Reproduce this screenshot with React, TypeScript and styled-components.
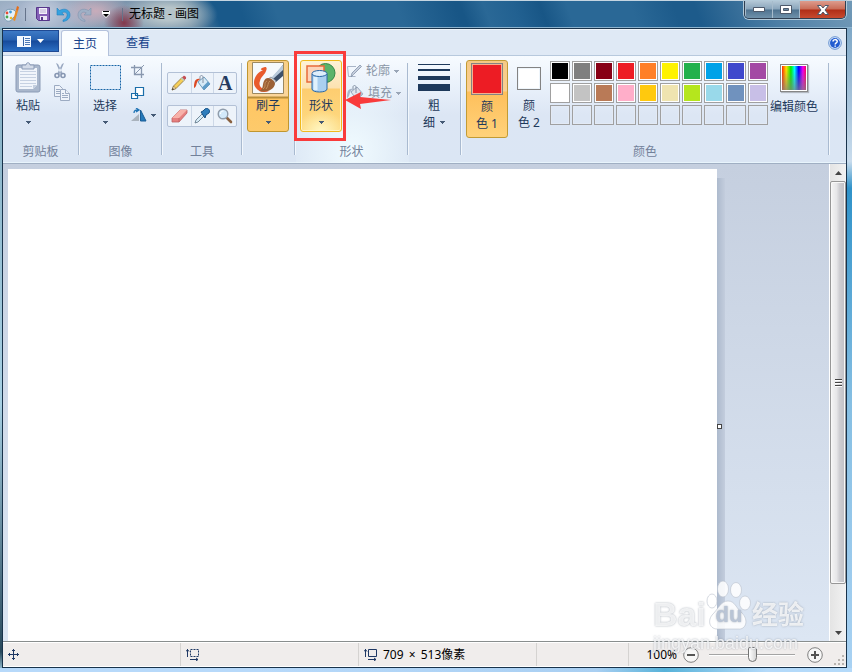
import React from 'react';
import styled, { createGlobalStyle, css } from 'styled-components';

const GlobalStyle = createGlobalStyle`
  * { box-sizing: border-box; }
  body {
    margin: 0;
    font: 12px/16px "Noto Sans", "Noto Sans CJK SC", sans-serif;
    color: #1e395b;
    overflow: hidden;
  }
  button { font: inherit; color: inherit; padding: 0; border: 0; background: none; }
  svg { display: block; flex: none; }
`;

const Frame = styled.div`
  display: flex;
  flex-direction: column;
  height: 100vh;
  padding: 0 5px 4px 2px;
  background:
    linear-gradient(90deg, #b7d9fa, #b7d9fa 30%, #a9cff2 70%, #57b2d9 78%, #b4dafa 90%) bottom / 100% 4px no-repeat,
    linear-gradient(#6f9dbf, #c9dced 24%, #2f92c9 28%, #86bfe3 60%, #a9d2f3) right / 5px 100% no-repeat,
    linear-gradient(#7fa9bd, #a7d0e3 60%, #29495c 97%, #a7d0e3);
`;

const TitleBar = styled.header`
  display: flex;
  justify-content: space-between;
  align-items: flex-start;
  flex: none;
  height: 28px;
  margin: 0 -5px 0 -2px;
  padding-right: 6px;
  border-top: 1px solid #c5d5e1;
  border-bottom: 1px solid #8db4cf;
  background:
    radial-gradient(ellipse 24px 18px at 42px 12px, #c7cfdf, transparent),
    radial-gradient(ellipse 20px 18px at 124px 22px, #84384b, transparent),
    radial-gradient(ellipse 34px 18px at 96px 10px, #c8acba, transparent),
    radial-gradient(ellipse 50px 22px at 168px 13px, #b6c4c9 30%, transparent),
    radial-gradient(ellipse 70px 26px at 40px 14px, #a4b4ca 50%, transparent),
    linear-gradient(70deg, #93aabd, #7e96ae 120px, #6787a0 180px, #19598a 208px, #19598a 232px,
      #2a6896 265px, #2a6896 380px, #185686 435px, #185686 440px, #2a6896 462px, #226191 490px,
      #185686 515px, #2a6896 540px, #2a6896 600px, #1d5b8b 640px, #1d5b8b 660px, #4f80a6 735px, #7199b7);
`;

const QuickAccess = styled.div`
  display: flex;
  align-items: center;
  height: 26px;
  padding-left: 3px;
`;

const QuickButton = styled.button`
  display: grid;
  place-items: center;
  width: 21px;
  height: 24px;
`;

const QuickDivider = styled.span`
  width: 1px;
  height: 13px;
  margin: 0 6px;
  background: #65738a;
`;

const Title = styled.h1`
  margin: 0;
  font-size: 12px;
  font-weight: 400;
  line-height: 16px;
  color: #000;
`;

const WindowControls = styled.div`
  display: flex;
  border: 1px solid #2f3f52;
  border-top: 0;
  border-radius: 0 0 5px 5px;
  box-shadow: 0 0 0 1px #b3cad9;
  overflow: hidden;
`;

const WindowButton = styled.button<{ $close?: boolean }>`
  display: grid;
  place-items: center;
  width: ${p => (p.$close ? 46 : 27)}px;
  height: 17px;
  border-left: 1px solid #a7bccc;
  background: ${p => p.$close
    ? 'linear-gradient(#dd9c8d, #c96b56 48%, #b02d16 52%, #c74a2f)'
    : 'linear-gradient(#b3c7d6, #88a4ba 48%, #4e728f 52%, #7092ab)'};
`;

const Client = styled.main`
  display: flex;
  flex-direction: column;
  flex: 1;
  min-height: 0;
  border: 1px solid #19334b;
`;

const TabRow = styled.nav`
  display: flex;
  align-items: flex-end;
  flex: none;
  height: 26px;
  padding-right: 4px;
  border-top: 1px solid #eef5fb;
  background: #dfe9f5;
`;

const FileButton = styled.button`
  display: flex;
  align-items: center;
  justify-content: center;
  gap: 6px;
  align-self: flex-start;
  width: 56px;
  height: 22px;
  border: 1px solid #1f4a94;
  border-left: 0;
  background: linear-gradient(#3d79c5, #2862b0 45%, #164a9b 50%, #2b6ec2);
`;

const Tab = styled.button<{ $active?: boolean }>`
  height: ${p => (p.$active ? 26 : 25)}px;
  padding: 0 ${p => (p.$active ? 11 : 14)}px;
  margin-left: 2px;
  margin-bottom: ${p => (p.$active ? -1 : 0)}px;
  color: #15428b;
  border: 1px solid transparent;
  border-bottom: 0;
  border-radius: 3px 3px 0 0;
  z-index: 1;
  ${p => p.$active && css`
    border-color: #b4c2dc;
    background: #fafdff;
  `}
`;

const HelpButton = styled.button`
  margin: 0 0 5px auto;
`;

const Ribbon = styled.section`
  display: flex;
  flex: none;
  height: 109px;
  border-top: 1px solid #b7c9dd;
  border-bottom: 1px solid #a0afc3;
  box-shadow: inset 0 -1px #e8f4fc;
  background: linear-gradient(#f7fbff, #e8f0fa 30%, #dce6f4 55%, #dbe6f4);
`;

const Group = styled.section<{ $width: number; $hot?: boolean }>`
  position: relative;
  display: flex;
  flex-direction: column;
  justify-content: space-between;
  flex: none;
  width: ${p => p.$width}px;
  padding: 4px 6px 2px 4px;
  ${p => p.$hot && css`
    background: radial-gradient(ellipse 60% 75% at 50% 90%, #f0fbff, rgba(240, 251, 255, 0));
  `}
  &::after {
    content: "";
    position: absolute;
    right: 0;
    top: 7px;
    bottom: 8px;
    width: 2px;
    background: linear-gradient(90deg, #a9bad0 50%, #f2f7fc 50%);
  }
`;

const GroupBody = styled.div`
  display: flex;
  height: 78px;
`;

const GroupLabel = styled.h2`
  margin: 0;
  font-size: 12px;
  font-weight: 400;
  line-height: 18px;
  text-align: center;
  color: #72819a;
`;

const BigButton = styled.button<{ $tone?: 'split' | 'hover' | 'selected' }>`
  display: flex;
  flex-direction: column;
  align-items: center;
  flex: none;
  width: 42px;
  height: ${p => (p.$tone === 'selected' ? 78 : 72)}px;
  border: 1px solid transparent;
  border-radius: 3px;
  ${p => p.$tone === 'split' && css`
    border-color: #c0962f;
    background: linear-gradient(#f8cf86, #fbd69b 35px, #b98f3a 36px, #b98f3a 37px, #ffc663 38px, #fdca6b);
  `}
  ${p => p.$tone === 'hover' && css`
    border-color: #f0b91e;
    box-shadow: inset 0 0 0 1px #fff4c9;
    background: radial-gradient(ellipse 60% 30% at 50% 100%, #fff7c4, transparent),
      linear-gradient(#fdf1d8, #fce2b0 27px, #fdcd70 28px, #fedb83);
  `}
  ${p => p.$tone === 'selected' && css`
    border-color: #c29b34;
    background: linear-gradient(#f5c985, #fcd092 30px, #febf5b 31px, #ffd27a);
  `}
`;

const IconSlot = styled.span`
  display: grid;
  place-items: center;
  height: 38px;
  padding-bottom: 2px;
`;

const ButtonText = styled.span`
  line-height: 18px;
`;

const InlineText = styled.span`
  display: flex;
  align-items: center;
  gap: 5px;
  line-height: 17px;
`;

const StackText = styled.span`
  display: flex;
  flex-direction: column;
  align-items: center;
  line-height: 17px;
`;

const ArrowSlot = styled.span`
  display: grid;
  place-items: center;
  height: 17px;
`;

const SmallColumn = styled.div`
  display: flex;
  flex-direction: column;
  margin-left: 3px;
`;

const SmallButton = styled.button`
  display: flex;
  align-items: center;
  gap: 4px;
  height: 22px;
  padding-left: 2px;
  &:disabled { color: #8995a6; }
`;

const ToolRows = styled.div`
  display: flex;
  flex-direction: column;
  gap: 11px;
  width: 70px;
  padding-top: 12px;
`;

const ToolRow = styled.div`
  display: grid;
  grid-template-columns: repeat(3, 1fr);
  height: 22px;
  border: 1px solid #b3c1d6;
  border-radius: 2px;
  background: #edf3fa;
`;

const ToolButton = styled.button`
  display: grid;
  place-items: center;
  & + & { border-left: 1px solid #cdd8e7; }
`;

const ColorSample = styled.span<{ $color: string; $large?: boolean }>`
  width: ${p => (p.$large ? 32 : 24)}px;
  height: ${p => (p.$large ? 32 : 24)}px;
  margin: ${p => (p.$large ? '2px 0 3px' : '6px 0 7px')};
  border: 1px solid #838383;
  box-shadow: inset 0 0 0 1px ${p => (p.$large ? '#f5b08e' : '#eef5fb')};
  background: ${p => p.$color};
`;

const Palette = styled.div`
  display: grid;
  grid-template-columns: repeat(10, 20px);
  grid-auto-rows: 20px;
  gap: 2px;
  padding-top: 1px;
`;

const Swatch = styled.button<{ $color: string }>`
  border: 1px solid #a0a0a0;
  background: ${p => p.$color};
  box-shadow: inset 0 0 0 1px ${p => (p.$color === 'transparent' ? '#e3eaf5' : '#fff')};
`;

const EditColors = styled.button`
  display: flex;
  flex-direction: column;
  align-items: center;
  width: 52px;
  height: 72px;
  white-space: nowrap;
`;

const Spectrum = styled.span`
  width: 28px;
  height: 28px;
  margin: 4px 0 7px;
  border: 1px solid #868686;
  box-shadow: inset 0 0 0 1px #fff, 1px 1px 1px #b2b8c0;
  background:
    linear-gradient(transparent 20%, rgba(128, 128, 128, 0.75)),
    linear-gradient(90deg, #f00, #fd0 20%, #0e0 38%, #0ff 52%, #00f 68%, #e0e 84%, #f03);
`;

const Highlight = styled.div`
  position: absolute;
  left: -2px;
  top: -5px;
  width: 52px;
  height: 90px;
  border: 3px solid #f93b3b;
  pointer-events: none;
  z-index: 2;
`;

const Pointer = styled.svg`
  position: absolute;
  left: 49px;
  top: 36px;
  z-index: 2;
`;

const Workspace = styled.section`
  display: flex;
  flex: 1;
  min-height: 0;
  background: linear-gradient(#c5cfdf, #dce6f3);
`;

const Viewport = styled.div`
  flex: 1;
  min-width: 0;
  overflow: hidden;
  padding: 5px;
`;

const Canvas = styled.div`
  position: relative;
  width: 709px;
  height: 513px;
  background: #fff;
  &::after {
    content: "";
    position: absolute;
    left: 100%;
    top: 9px;
    bottom: 0;
    width: 8px;
    background: linear-gradient(90deg, #adbacd, #c3cddd);
  }
`;

const Handle = styled.span`
  position: absolute;
  left: 100%;
  top: 50%;
  width: 5px;
  height: 5px;
  margin-top: -2px;
  border: 1px solid #444;
  background: #fff;
  z-index: 1;
`;

const ScrollBar = styled.div`
  display: flex;
  flex-direction: column;
  width: 17px;
  border-left: 1px solid #fff;
  background: linear-gradient(90deg, #e4e4e4, #f2f2f2);
`;

const ScrollArrow = styled.button`
  display: grid;
  place-items: center;
  height: 17px;
`;

const ScrollTrack = styled.div`
  flex: 1;
`;

const ScrollThumb = styled.div`
  display: grid;
  place-items: center;
  height: 91%;
  border: 1px solid #979797;
  border-radius: 2px;
  box-shadow: inset 0 0 0 1px #f8f8f8;
  background: linear-gradient(90deg, #f5f5f5, #e6e6e8 40%, #cfcfd3 60%, #bfbfc4);
`;

const StatusBar = styled.footer`
  display: flex;
  flex: none;
  height: 26px;
  padding: 1px 0;
  border-top: 1px solid #898e8e;
  box-shadow: inset 0 1px #fff, inset 0 -1px #fff;
  background: #f0edec;
  color: #000;
`;

const StatusCell = styled.div<{ $width?: number }>`
  display: flex;
  align-items: center;
  gap: 6px;
  flex: ${p => (p.$width ? `0 0 ${p.$width}px` : '1')};
  padding-left: 5px;
  border-right: 1px solid #d5d3d1;
`;

const Times = styled.span`
  margin: 0 2px;
`;

const ZoomArea = styled.div`
  position: relative;
  display: flex;
  align-items: center;
  gap: 6px;
  padding: 0 23px 0 17px;
`;

const ZoomSlider = styled.input`
  appearance: none;
  width: 86px;
  height: 18px;
  margin: 0 6px 0 4px;
  background: linear-gradient(#a4a4a4, #a4a4a4) 0 8px / 100% 1px no-repeat,
    linear-gradient(#fff, #fff) 0 9px / 100% 1px no-repeat;
  &::-webkit-slider-thumb {
    appearance: none;
    width: 9px;
    height: 15px;
    border: 1px solid #737373;
    border-radius: 2px 2px 5px 5px;
    background: linear-gradient(90deg, #fff, #d5d5d5);
  }
`;

const Grip = styled.svg`
  position: absolute;
  right: 2px;
  bottom: 1px;
`;

const Watermark = styled.div`
  position: fixed;
  right: 48px;
  bottom: 18px;
  width: 151px;
  font-family: "Liberation Sans", "Noto Sans CJK SC", sans-serif;
  color: rgba(255, 255, 255, 0.8);
  text-shadow: 0 0 2px rgba(125, 135, 150, 0.7);
  white-space: nowrap;
  pointer-events: none;
  z-index: 3;
`;

const WatermarkLogo = styled.div`
  display: flex;
  align-items: flex-end;
  height: 50px;
  font-size: 34px;
  font-weight: 700;
  line-height: 32px;
`;

const WatermarkChinese = styled.span`
  font-size: 26px;
  line-height: 30px;
`;

const Paw = styled.span`
  position: relative;
  display: flex;
  justify-content: center;
  align-items: flex-end;
  flex: none;
  width: 46px;
  height: 50px;
`;

const PawText = styled.span`
  position: absolute;
  bottom: 3px;
  font-size: 22px;
  line-height: 24px;
  color: #b9c4d5;
`;

const WatermarkUrl = styled.div`
  padding-top: 2px;
  font-size: 18px;
  line-height: 22px;
`;

const Caret = ({ color = '#455a75' }: { color?: string }) => (
  <svg width="5" height="3" viewBox="0 0 5 3" shapeRendering="crispEdges">
    <path d="M0 0h5v1H4v1H3v1H2V2H1V1H0z" fill={color} />
  </svg>
);

const PaintIcon = () => (
  <svg width="16" height="16" viewBox="0 0 16 16">
    <path d="M1 9C1 4 6 2 11 4c3 2 3 6 0 7-2 1-1 3-4 4-4 1-6-2-6-6z" fill="#e5f1f8" stroke="#7799b1" />
    <circle cx="4" cy="7" r="1.4" fill="#e34a35" /><circle cx="7.5" cy="6" r="1.4" fill="#3e9ad9" />
    <circle cx="4" cy="11" r="1.4" fill="#47a852" /><circle cx="8" cy="12" r="1.3" fill="#edbc2c" />
    <path d="M15 5 12 15l-2-1 3-10z" fill="#ec8d21" /><path d="m13 4 1-4 2 1-1 4z" fill="#e56d16" />
  </svg>
);

const SaveIcon = () => (
  <svg width="14" height="14" viewBox="0 0 14 14">
    <path d="M.5.5h13v13h-11l-2-2z" fill="#8560b7" stroke="#56368a" />
    <path d="M3 1h8v6H3z" fill="#f2effa" /><path d="M4 3h6M4 5h6" stroke="#bab0d2" />
    <path d="M4 9h7v4H4z" fill="#eae5f5" /><path d="M5 10h2v3H5z" fill="#56368a" />
  </svg>
);

const UndoIcon = ({ redo }: { redo?: boolean }) => (
  <svg width="15" height="15" viewBox="0 0 15 15">
    <path transform={redo ? 'matrix(-1 0 0 1 15 0)' : undefined}
      d="M1 1v7h7L5.8 5.8C9 4 12 6 11 9c-.5 2-2 3-4 4v1.5c4-.5 7-3 7-6.5C14 3 9 .5 3.5 3.5z"
      fill={redo ? '#9fb0c6' : '#35a2df'} stroke={redo ? '#7f93ae' : '#2382c1'} strokeWidth=".6" />
  </svg>
);

const CustomizeIcon = () => (
  <svg width="8" height="7" viewBox="0 0 8 7">
    <path d="M0 0h8v3H0zM0 3h8L4 7z" fill="#fff" />
    <path d="M1 0h6v1H1zM1 3h6L4 6z" fill="#000" />
  </svg>
);

const FileIcon = () => (
  <svg width="14" height="11" viewBox="0 0 14 11" shapeRendering="crispEdges">
    <path d="M0 0h14v11H0z" fill="#f4f9ff" /><path d="M6 1h1v9H6z" fill="#3766a8" />
    <path d="M8 2h5v1H8zM8 4h5v1H8zM8 6h5v1H8zM8 8h5v1H8z" fill="#4e79b5" />
  </svg>
);

const HelpIcon = () => (
  <svg width="14" height="14" viewBox="0 0 14 14">
    <circle cx="7" cy="7" r="6.3" fill="#dcebff" stroke="#6591cf" />
    <circle cx="7" cy="7" r="5" fill="#225cd0" />
    <path d="M5 5.6C5 3 9.3 3 9.2 5.4 9.2 7 7.2 6.8 7.2 8.5M7.2 9.4v1.4" fill="none" stroke="#fff" strokeWidth="1.5" />
  </svg>
);

const PasteIcon = () => (
  <svg width="26" height="32" viewBox="0 0 26 32">
    <rect x="1" y="3" width="24" height="27" rx="2" fill="#a9b7cc" stroke="#8b9bb6" />
    <path d="M4 6h18v17l-4 4H4z" fill="#f1f5fb" />
    <path d="M5 9.5h16M5 12.5h16M5 15.5h16M5 18.5h16M5 21.5h16M5 24.5h12" stroke="#c6d1e2" />
    <path d="M22 23h-4v4z" fill="#c4cfdf" />
    <path d="M7 3h4c0-3 4-3 4 0h4v4H7z" fill="#d3dbe8" stroke="#8b9bb6" />
  </svg>
);

const CutIcon = () => (
  <svg width="12" height="16" viewBox="0 0 12 16">
    <path d="M2 0 4 1l5 10-2 1zM10 0 8 1 3 11l2 1z" fill="#9aa9c1" />
    <circle cx="3" cy="12.5" r="2" fill="none" stroke="#8797b2" strokeWidth="1.6" />
    <circle cx="9" cy="12.5" r="2" fill="none" stroke="#8797b2" strokeWidth="1.6" />
  </svg>
);

const CopyIcon = () => (
  <svg width="16" height="16" viewBox="0 0 16 16" fill="#eef3fa" stroke="#9cabc2">
    <path d="M.5.5h5l3 3v8h-8z" /><path d="M2 4.5h4M2 6.5h4M2 8.5h4" />
    <path d="M6.500 4.500h5l4 4v7h-9z" /><path d="M11.500 4.500v4h4M8 8.500h2M8 10.500h6M8 12.500h6" />
  </svg>
);

const SelectIcon = () => (
  <svg width="31" height="25" viewBox="0 0 31 25">
    <path d="M.5.5h30v24H.5z" fill="#e3eefb" stroke="#1664a7" strokeDasharray="2 1" />
  </svg>
);

const CropIcon = () => (
  <svg width="14" height="14" viewBox="0 0 14 14" fill="none" stroke="#8998af">
    <path d="M0 3.500h10.500V14M3.500 1v9.500H13" strokeWidth="1.300" /><path d="M3 11 13 1" />
  </svg>
);

const ResizeIcon = () => (
  <svg width="14" height="14" viewBox="0 0 14 14" fill="#fff" stroke="#1b6eaa" strokeWidth="1.200">
    <path d="M4.500 1.500h8v8h-8zM.5 7.500h6v5h-6z" />
  </svg>
);

const RotateIcon = () => (
  <svg width="16" height="14" viewBox="0 0 16 14">
    <path d="M0 13h8V6z" fill="#aab3bd" /><path d="M9.500 2v11H15z" fill="#2479bb" stroke="#185c95" />
    <path d="M3 5c0-3 2-3 4-3M5 0l3 2-3 2" fill="none" stroke="#2074b5" strokeWidth="1.300" />
  </svg>
);

const PencilIcon = () => (
  <svg width="16" height="16" viewBox="0 0 16 16">
    <path d="m1 15 1.500-4L11 2.500 13.500 5 5 13.500z" fill="#f6cf58" stroke="#88713c" strokeWidth=".8" />
    <path d="m1 15 1.500-4L5 13.500z" fill="#f6dfb3" stroke="#705d37" strokeWidth=".5" />
    <path d="m1 15 .7-2L3 14.300z" fill="#333" />
    <path d="m11 2.500 1.500-1.500c1-.8 3.300 1.300 2.500 2.500L13.500 5z" fill="#c55056" /><path d="m10 3.500 2.500 2.500 1-1L11 2.500z" fill="#b9cfc0" />
  </svg>
);

const BucketIcon = ({ muted }: { muted?: boolean }) => (
  <svg width="17" height="16" viewBox="0 0 17 16">
    <path d="m4 7 6-5 6 7-6 6z" fill={muted ? '#dfe5ee' : '#d6eaf7'} stroke={muted ? '#97a5bb' : '#6d9dbd'} />
    <path d="m10 15 6-6-2-2.500-6 6z" fill={muted ? '#b2bdce' : '#5f9cc8'} />
    <path d="M9 8V2c0-2-3-2-3 0v3" fill="none" stroke="#8592a4" />
    <path d="M6 4C1 3 0 7 0 13c3-1 2-5 4-7z" fill={muted ? '#aab7ca' : '#dc4a25'} />
  </svg>
);

const LetterTool = styled.span`
  font: 700 20px/20px "Liberation Serif", serif;
  color: #243a60;
`;

const EraserIcon = () => (
  <svg width="17" height="14" viewBox="0 0 17 14">
    <path d="m1 9 8-8h7v3l-8 9H1z" fill="#e6807f" stroke="#be5f63" strokeWidth=".8" />
    <path d="m1 9 8-8h7L8 9z" fill="#f7b1a9" /><path d="M8 9v4" stroke="#be5f63" strokeWidth=".8" />
  </svg>
);

const DropperIcon = () => (
  <svg width="16" height="16" viewBox="0 0 16 16">
    <path d="m1 15 1-3 6-6 2 2-6 6z" fill="#d9edf8" stroke="#5a7183" strokeWidth=".8" />
    <path d="m7 4 2-1 2-2c2-2 6 1 4 4l-3 2-1 3z" fill="#2e7dbc" stroke="#175287" />
  </svg>
);

const MagnifierIcon = () => (
  <svg width="16" height="16" viewBox="0 0 16 16">
    <path d="m10 10 4 4" stroke="#8a6241" strokeWidth="2.600" strokeLinecap="round" />
    <circle cx="6" cy="6" r="4.800" fill="#d2e9fa" stroke="#8f9cab" strokeWidth="1.400" />
    <path d="M3.500 6c0-2 1-3 3-3" stroke="#fff" fill="none" />
  </svg>
);

const BrushIcon = () => (
  <svg width="32" height="32" viewBox="0 0 32 32">
    <path d="M.5.5h31v31H.5z" fill="#f5f9fc" stroke="#9c8961" />
    <path d="M13 5C9 6 7 8 11 8 4 11-1 20 4 26c3 4 8 5 13 3-7-1-11-5-9-10 1-5 5-6 6-10 1-2 1-4-1-4z" fill="#e95b2d" />
    <path d="M31 3v11l-7 6-4-4z" fill="#3d5069" /><path d="m31 3-12 13 2 1L31 8z" fill="#b9cadb" />
    <path d="m19 15 5 4-2 3-6-5z" fill="#d7dce1" stroke="#7b848d" strokeWidth=".7" />
    <path d="M16 16c3 0 7 3 7 6-1 5-7 9-16 7 5-2 3-6 5-10 1-2 2-3 4-3z" fill="#9c6136" />
    <path d="M15 19c-4 2 0 5-4 8M18 19c-3 2-1 5-4 8" fill="none" stroke="#c5935f" />
  </svg>
);

const ShapesIcon = () => (
  <svg width="30" height="30" viewBox="0 0 30 30">
    <circle cx="19.500" cy="10" r="9.500" fill="#5ab36a" stroke="#348747" />
    <path d="M1 3h17v16H1z" fill="#fcd4b8" stroke="#e76b3a" strokeWidth="1.500" />
    <path d="M6 11v15c0 4 15 4 15 0V11z" fill="#aacff0" stroke="#2866a6" />
    <path d="M9.500 14v13" stroke="#e0f1fc" strokeWidth="4" />
    <ellipse cx="13.500" cy="10.500" rx="7.500" ry="3" fill="#deeefb" stroke="#2866a6" />
  </svg>
);

const OutlineIcon = () => (
  <svg width="15" height="14" viewBox="0 0 15 14">
    <path d="M9 2.500H.5l1 10h7" fill="none" stroke="#a9b5c8" />
    <path d="m4 13 1-4 8-8 1.500 1.500-8 8z" fill="#c6cfdd" stroke="#8493aa" strokeWidth=".8" />
  </svg>
);

const SizeIcon = () => (
  <svg width="32" height="28" viewBox="0 0 32 28" shapeRendering="crispEdges">
    <path d="M0 0h32v1H0zM0 5h32v2H0zM0 12h32v4H0zM0 20h32v7H0z" fill="#1e395b" />
  </svg>
);

const MoveIcon = () => (
  <svg width="11" height="11" viewBox="0 0 11 11" shapeRendering="crispEdges">
    <path d="M5 0h1v11H5zM0 5h11v1H0zM4 1h3v1H4zM4 9h3v1H4zM1 4h1v3H1zM9 4h1v3H9z" fill="#1f3864" />
  </svg>
);

const DimensionIcon = ({ dashed }: { dashed?: boolean }) => (
  <svg width="13" height="12" viewBox="0 0 13 12">
    <path d="M4.500.5h8v7h-8z" fill="none" stroke="#1f3864" strokeDasharray={dashed ? '2 1' : undefined} />
    <path d="M1.500 8V0M0 2.500 1.500.5 3 2.500M4 10.500h8M10 9l2 1.500L10 12" fill="none" stroke="#1f3864" />
  </svg>
);

const ZoomGlyph = ({ plus }: { plus?: boolean }) => (
  <svg width="16" height="16" viewBox="0 0 16 16">
    <circle cx="8" cy="8" r="7.300" fill="#f7f7f7" stroke="#808080" />
    <path d="M4 8h8" stroke="#555" strokeWidth="2" />
    {plus && <path d="M8 4v8" stroke="#555" strokeWidth="2" />}
  </svg>
);

const ScrollTriangle = ({ down }: { down?: boolean }) => (
  <svg width="7" height="4" viewBox="0 0 7 4">
    <path d={down ? 'M0 0h7L3.500 4z' : 'M0 4h7L3.500 0z'} fill="#444" />
  </svg>
);

const palette = [
  '#000000', '#7f7f7f', '#880015', '#ed1c24', '#ff7f27', '#fff200', '#22b14c', '#00a2e8', '#3f48cc', '#a349a4',
  '#ffffff', '#c3c3c3', '#b97a57', '#ffaec9', '#ffc90e', '#efe4b0', '#b5e61d', '#99d9ea', '#7092be', '#c8bfe7',
  ...Array<string>(10).fill('transparent'),
];

export default function App() {
  return (
    <Frame>
      <GlobalStyle />
      <TitleBar>
        <QuickAccess>
          <PaintIcon />
          <QuickDivider />
          <QuickButton aria-label="保存"><SaveIcon /></QuickButton>
          <QuickButton aria-label="撤消"><UndoIcon /></QuickButton>
          <QuickButton aria-label="重做" disabled><UndoIcon redo /></QuickButton>
          <QuickButton aria-label="自定义快速访问工具栏"><CustomizeIcon /></QuickButton>
          <QuickDivider as="i" />
          <Title>无标题 - 画图</Title>
        </QuickAccess>
        <WindowControls>
          <WindowButton aria-label="最小化">
            <svg width="12" height="6"><path d="M.5.5h11v4H.5z" fill="#fff" stroke="#4d596b" /></svg>
          </WindowButton>
          <WindowButton aria-label="最大化">
            <svg width="12" height="10"><path d="M.5.5h11v8H.5z" fill="#fff" stroke="#4d596b" /><path d="M3.500 3.500h5v2h-5z" fill="#6b8ba4" stroke="#4d596b" /></svg>
          </WindowButton>
          <WindowButton aria-label="关闭" $close>
            <svg width="12" height="10" viewBox="0 0 12 10"><path d="M.5.5h3.500l2 2.500 2-2.500h3.500L8 5l3.500 4.500H8L6 7 4 9.500H.5L4 5z" fill="#fff" stroke="#4d596b" /></svg>
          </WindowButton>
        </WindowControls>
      </TitleBar>
      <Client>
        <TabRow>
          <FileButton aria-label="画图菜单"><FileIcon />
            <svg width="7" height="4" viewBox="0 0 7 4"><path d="M0 0h7L3.500 4z" fill="#fff" /></svg>
          </FileButton>
          <Tab $active>主页</Tab>
          <Tab>查看</Tab>
          <HelpButton aria-label="帮助"><HelpIcon /></HelpButton>
        </TabRow>
        <Ribbon>
          <Group $width={77}>
            <GroupBody>
              <BigButton>
                <IconSlot><PasteIcon /></IconSlot>
                <ButtonText>粘贴</ButtonText>
                <ArrowSlot><Caret /></ArrowSlot>
              </BigButton>
              <SmallColumn>
                <SmallButton aria-label="剪切"><CutIcon /></SmallButton>
                <SmallButton aria-label="复制"><CopyIcon /></SmallButton>
              </SmallColumn>
            </GroupBody>
            <GroupLabel>剪贴板</GroupLabel>
          </Group>
          <Group $width={83}>
            <GroupBody>
              <BigButton>
                <IconSlot><SelectIcon /></IconSlot>
                <ButtonText>选择</ButtonText>
                <ArrowSlot><Caret /></ArrowSlot>
              </BigButton>
              <SmallColumn>
                <SmallButton aria-label="裁剪"><CropIcon /></SmallButton>
                <SmallButton aria-label="重新调整大小"><ResizeIcon /></SmallButton>
                <SmallButton aria-label="旋转"><RotateIcon /><Caret /></SmallButton>
              </SmallColumn>
            </GroupBody>
            <GroupLabel>图像</GroupLabel>
          </Group>
          <Group $width={80}>
            <GroupBody>
              <ToolRows>
                <ToolRow>
                  <ToolButton aria-label="铅笔"><PencilIcon /></ToolButton>
                  <ToolButton aria-label="用颜色填充"><BucketIcon /></ToolButton>
                  <ToolButton aria-label="文本"><LetterTool>A</LetterTool></ToolButton>
                </ToolRow>
                <ToolRow>
                  <ToolButton aria-label="橡皮擦"><EraserIcon /></ToolButton>
                  <ToolButton aria-label="颜色选取器"><DropperIcon /></ToolButton>
                  <ToolButton aria-label="放大镜"><MagnifierIcon /></ToolButton>
                </ToolRow>
              </ToolRows>
            </GroupBody>
            <GroupLabel>工具</GroupLabel>
          </Group>
          <Group $width={53}>
            <GroupBody>
              <BigButton $tone="split">
                <IconSlot><BrushIcon /></IconSlot>
                <ButtonText>刷子</ButtonText>
                <ArrowSlot><Caret /></ArrowSlot>
              </BigButton>
            </GroupBody>
          </Group>
          <Group $width={113} $hot>
            <GroupBody>
              <BigButton $tone="hover">
                <IconSlot><ShapesIcon /></IconSlot>
                <ButtonText>形状</ButtonText>
                <ArrowSlot><Caret /></ArrowSlot>
              </BigButton>
              <SmallColumn>
                <SmallButton disabled><OutlineIcon />轮廓<Caret color="#9aa6b7" /></SmallButton>
                <SmallButton disabled><BucketIcon muted />填充<Caret color="#9aa6b7" /></SmallButton>
              </SmallColumn>
            </GroupBody>
            <GroupLabel>形状</GroupLabel>
            <Highlight />
            <Pointer width="46" height="18" viewBox="0 0 46 18">
              <path d="M0 8 16 0l-1 5 31 3-31 4 1 5z" fill="#f93b3b" />
            </Pointer>
          </Group>
          <Group $width={53}>
            <GroupBody>
              <BigButton>
                <IconSlot><SizeIcon /></IconSlot>
                <StackText><span>粗</span><InlineText>细<Caret /></InlineText></StackText>
              </BigButton>
            </GroupBody>
          </Group>
          <Group $width={368}>
            <GroupBody>
              <BigButton $tone="selected">
                <ColorSample $color="#ed1c24" $large />
                <StackText><span>颜</span><span>色 1</span></StackText>
              </BigButton>
              <BigButton>
                <ColorSample $color="#fff" />
                <StackText><span>颜</span><span>色 2</span></StackText>
              </BigButton>
              <Palette>
                {palette.map((color, i) => (
                  <Swatch key={i} $color={color} aria-label={`颜色 ${i + 1}`} />
                ))}
              </Palette>
              <EditColors><Spectrum />编辑颜色</EditColors>
            </GroupBody>
            <GroupLabel>颜色</GroupLabel>
          </Group>
        </Ribbon>
        <Workspace>
          <Viewport><Canvas><Handle /></Canvas></Viewport>
          <ScrollBar>
            <ScrollArrow aria-label="向上滚动"><ScrollTriangle /></ScrollArrow>
            <ScrollTrack>
              <ScrollThumb>
                <svg width="7" height="8" shapeRendering="crispEdges">
                  <path d="M0 0h7v1H0zM0 3h7v1H0zM0 6h7v1H0z" fill="#444" />
                  <path d="M0 1h7v1H0zM0 4h7v1H0zM0 7h7v1H0z" fill="#fff" />
                </svg>
              </ScrollThumb>
            </ScrollTrack>
            <ScrollArrow aria-label="向下滚动"><ScrollTriangle down /></ScrollArrow>
          </ScrollBar>
        </Workspace>
        <StatusBar>
          <StatusCell $width={178}><MoveIcon /></StatusCell>
          <StatusCell $width={178}><DimensionIcon dashed /></StatusCell>
          <StatusCell $width={178}><DimensionIcon /><span>709 <Times>×</Times> 513像素</span></StatusCell>
          <StatusCell />
          <ZoomArea>
            <span>100%</span>
            <button aria-label="缩小"><ZoomGlyph /></button>
            <ZoomSlider type="range" aria-label="缩放" defaultValue={50} />
            <button aria-label="放大"><ZoomGlyph plus /></button>
            <Grip width="10" height="10" viewBox="0 0 10 10">
              <path d="M8 0h2v2H8zM4 4h2v2H4zM8 4h2v2H8zM0 8h2v2H0zM4 8h2v2H4zM8 8h2v2H8z" fill="#b8b4b0" />
            </Grip>
          </ZoomArea>
        </StatusBar>
      </Client>
      <Watermark>
        <WatermarkLogo>
          <span>Bai</span>
          <Paw>
            <svg width="46" height="50" viewBox="0 0 46 50" fill="#fff" fillOpacity=".85" stroke="#b9c0cb" strokeOpacity=".6">
              <ellipse cx="6" cy="21" rx="5" ry="7" /><ellipse cx="17" cy="9" rx="5.500" ry="8" />
              <ellipse cx="30" cy="10" rx="5.500" ry="7.500" /><ellipse cx="39" cy="23" rx="5.500" ry="7" />
              <path d="M22 21c7 0 8 7 14 12 7 7 4 17-4 16H13C3 50 1 40 7 34c5-5 8-13 15-13z" />
            </svg>
            <PawText>du</PawText>
          </Paw>
          <WatermarkChinese>经验</WatermarkChinese>
        </WatermarkLogo>
        <WatermarkUrl>jingyan.baidu.com</WatermarkUrl>
      </Watermark>
    </Frame>
  );
}
